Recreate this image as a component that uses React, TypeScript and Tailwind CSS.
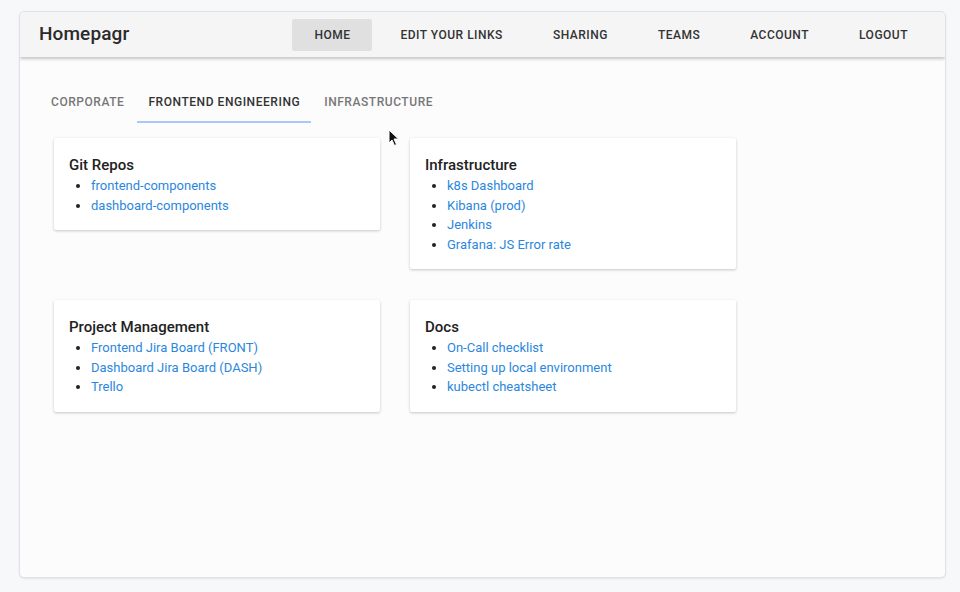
import React from "react";

const navItems = ["Home", "Edit your links", "Sharing", "Teams", "Account", "Logout"];
const tabs = ["Corporate", "Frontend Engineering", "Infrastructure"];

const cards = [
  { title: "Git Repos", links: ["frontend-components", "dashboard-components"] },
  { title: "Infrastructure", links: ["k8s Dashboard", "Kibana (prod)", "Jenkins", "Grafana: JS Error rate"] },
  { title: "Project Management", links: ["Frontend Jira Board (FRONT)", "Dashboard Jira Board (DASH)", "Trello"] },
  { title: "Docs", links: ["On-Call checklist", "Setting up local environment", "kubectl cheatsheet"] },
];

export default function App() {
  return (
    <div className="relative w-[960px] h-[592px] bg-[#f7f8f9] pl-[19px] pt-[11px] font-['Roboto',_'Liberation_Sans',_sans-serif]">
      <div className="w-[927px] h-[567px] bg-[#fcfcfc] border border-[#dfe2e6] rounded-[5px] shadow-[0_1px_2px_rgba(0,0,0,0.08)] overflow-hidden">
        {/* App bar */}
        <header className="h-[45px] bg-[#f5f5f5] flex items-center justify-between pl-[19px] pr-[15px] shadow-[0_2px_3px_rgba(0,0,0,0.22)] relative">
          <span className="text-[19px] font-medium text-[#2a2a2a] tracking-[0.1px]">Homepagr</span>
          <nav className="flex items-center gap-[6px]">
            {navItems.map((item, i) => (
              <a
                key={item}
                className={`h-[32px] flex items-center px-[22px] text-[12px] font-medium uppercase text-[#333] tracking-[0.5px] rounded-[2px] ${i === 0 ? "bg-[#e0e0e0]" : ""}`}
              >
                {item}
              </a>
            ))}
          </nav>
        </header>

        <div className="px-[19px] pt-[25px]">
          {/* Tabs */}
          <div className="flex gap-[2px] pl-px">
            {tabs.map((tab, i) => (
              <div
                key={tab}
                className={`h-[41px] flex items-center px-[11px] text-[12px] font-medium uppercase tracking-[0.55px] border-b-2 ${i === 1 ? "border-[#a9c8f5] text-[#333]" : "border-transparent text-[#777]"}`}
              >
                {tab}
              </div>
            ))}
          </div>

          {/* Cards */}
          <div className="grid grid-cols-[326px_326px] gap-x-[30px] gap-y-[31px] items-start pl-[15px] pt-[15px]">
            {cards.map((card) => (
              <div key={card.title} className="bg-white rounded-[2px] shadow-[0_1px_3px_rgba(0,0,0,0.22)] px-[15px] pt-[16px] pb-[15px]">
                <h3 className="text-[15px] leading-[22px] font-medium text-[#222]">{card.title}</h3>
                <ul className="list-disc pl-[22px] text-[13px] leading-[19.5px] marker:text-[#222]">
                  {card.links.map((link) => (
                    <li key={link}>
                      <a className="text-[#2b87de]">{link}</a>
                    </li>
                  ))}
                </ul>
              </div>
            ))}
          </div>
        </div>
      </div>

      {/* mouse cursor */}
      <svg className="absolute left-[388px] top-[129px]" width="12" height="18" viewBox="0 0 12 18">
        <path d="M1 1 L1 14 L4 11 L6.5 16.5 L8.5 15.5 L6 10 L10.5 10 Z" fill="#111" stroke="#fff" strokeWidth="1" />
      </svg>
    </div>
  );
}
